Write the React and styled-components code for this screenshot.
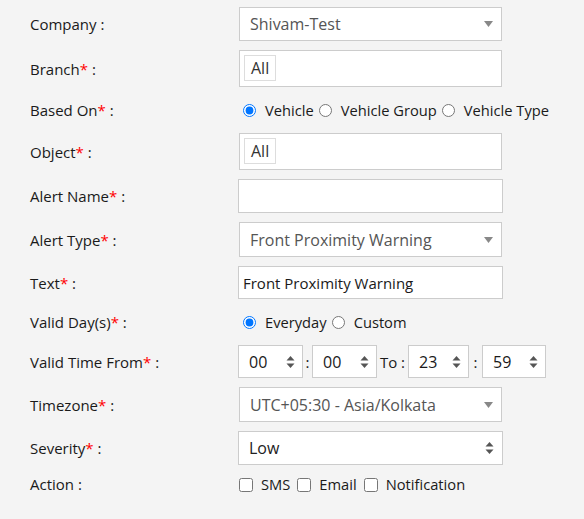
import React from "react";
import styled, { createGlobalStyle } from "styled-components";

const GlobalStyle = createGlobalStyle`
  html, body {
    margin: 0;
    padding: 0;
    background: #f4f4f4;
  }
  body {
    font-family: "Open Sans", "Liberation Sans", sans-serif;
    font-size: 15px;
    color: #1a1a1a;
  }
`;

const Form = styled.div`
  display: flex;
  flex-direction: column;
  gap: 9px;
  padding: 7px 0 0 30px;
  width: 584px;
  height: 512px;
  box-sizing: border-box;
`;

const Row = styled.div`
  display: flex;
  align-items: center;
  height: ${({ $h }) => $h}px;
  white-space: nowrap;
`;

const Label = styled.div`
  width: 208px;
  flex-shrink: 0;
  color: #1a1a1a;
`;

const Star = styled.span`
  color: #f00;
`;

const Control = styled.div`
  display: flex;
  align-items: center;
  height: 100%;
`;

const SelectWrap = styled.div`
  position: relative;
  margin-left: ${({ $flush }) => ($flush ? 0 : 1)}px;
  width: ${({ $flush }) => ($flush ? 265 : 263)}px;
  height: 100%;
`;

const Select = styled.select`
  appearance: none;
  width: 100%;
  height: 100%;
  box-sizing: border-box;
  border: 1px solid #ccc;
  border-radius: 0;
  background: #fff;
  padding: 0 30px 0 10px;
  font-family: inherit;
  font-size: 16px;
  color: ${({ $dark }) => ($dark ? "#222" : "#555")};
  outline: none;
`;

const Arrow = styled.span`
  position: absolute;
  right: ${({ $right }) => $right}px;
  top: 50%;
  transform: translateY(-50%);
  display: flex;
  pointer-events: none;
`;

const TagBox = styled.div`
  margin-left: 1px;
  width: 263px;
  height: 100%;
  box-sizing: border-box;
  border: 1px solid #ccc;
  background: #fff;
  padding: 4px;
  display: flex;
  align-items: flex-start;
`;

const Tag = styled.span`
  border: 1px solid #ddd;
  padding: 0 6px;
  height: 26px;
  line-height: 25px;
  box-sizing: border-box;
  font-size: 16px;
  color: #333;
  background: #fff;
`;

const TextInput = styled.input`
  width: 265px;
  height: 100%;
  box-sizing: border-box;
  border: 1px solid #ccc;
  border-radius: 0;
  background: #fff;
  padding: 0 4px;
  font-family: inherit;
  font-size: 15px;
  color: #1a1a1a;
  outline: none;
`;

const Choice = styled.label`
  display: flex;
  align-items: center;
  margin-right: ${({ $gap }) => $gap ?? 4}px;
  color: #1a1a1a;
  font-size: 14.7px;
`;

const Radio = styled.input.attrs({ type: "radio" })`
  width: 13px;
  height: 13px;
  margin: 1px 9px 0 ${({ $first }) => ($first ? 5 : 0)}px;
  accent-color: #0075ff;
`;

const Check = styled.input.attrs({ type: "checkbox" })`
  width: 14px;
  height: 14px;
  margin: 2px 8px 0 1px;
`;

const Spin = styled.div`
  position: relative;
  width: ${({ $w }) => $w}px;
  height: 100%;
`;

const SpinInput = styled.input`
  width: 100%;
  height: 100%;
  box-sizing: border-box;
  border: 1px solid #ccc;
  background: #fff;
  padding: 0 0 0 10px;
  font-family: inherit;
  font-size: 16px;
  color: #1a1a1a;
  outline: none;
`;

const Sep = styled.span`
  width: ${({ $w }) => $w}px;
  text-align: center;
  font-size: 15px;
  color: #1a1a1a;
`;

const DownTri = () => (
  <svg width="9" height="6" viewBox="0 0 9 6">
    <path d="M0 0 L9 0 L4.5 6 Z" fill="#888" />
  </svg>
);

const UpDown = () => (
  <svg width="9" height="13" viewBox="0 0 9 13">
    <path d="M0.5 5 L8.5 5 L4.5 0.5 Z" fill="#555" />
    <path d="M0.5 8 L8.5 8 L4.5 12.5 Z" fill="#555" />
  </svg>
);

const SelectField = ({ value, dark, updown }) => (
  <SelectWrap $flush={updown}>
    <Select $dark={dark} defaultValue={value}>
      <option>{value}</option>
    </Select>
    <Arrow $right={9}>{updown ? <UpDown /> : <DownTri />}</Arrow>
  </SelectWrap>
);

const TimeBox = ({ w, value }) => (
  <Spin $w={w}>
    <SpinInput defaultValue={value} readOnly />
    <Arrow $right={8}>
      <UpDown />
    </Arrow>
  </Spin>
);

const Req = ({ children }) => (
  <Label>
    {children}
    <Star>*</Star> :
  </Label>
);

export default function App() {
  return (
    <>
      <GlobalStyle />
      <Form>
        <Row $h={34}>
          <Label>Company :</Label>
          <Control>
            <SelectField value="Shivam-Test" />
          </Control>
        </Row>
        <Row $h={37}>
          <Req>Branch</Req>
          <Control>
            <TagBox>
              <Tag>All</Tag>
            </TagBox>
          </Control>
        </Row>
        <Row $h={28}>
          <Req>Based On</Req>
          <Control>
            <Choice $gap={5}>
              <Radio name="based" $first defaultChecked />
              Vehicle
            </Choice>
            <Choice $gap={5}>
              <Radio name="based" />
              Vehicle Group
            </Choice>
            <Choice>
              <Radio name="based" />
              Vehicle Type
            </Choice>
          </Control>
        </Row>
        <Row $h={37}>
          <Req>Object</Req>
          <Control>
            <TagBox>
              <Tag>All</Tag>
            </TagBox>
          </Control>
        </Row>
        <Row $h={34}>
          <Req>Alert Name</Req>
          <Control>
            <TextInput defaultValue="" />
          </Control>
        </Row>
        <Row $h={35}>
          <Req>Alert Type</Req>
          <Control>
            <SelectField value="Front Proximity Warning" />
          </Control>
        </Row>
        <Row $h={33}>
          <Req>Text</Req>
          <Control>
            <TextInput defaultValue="Front Proximity Warning" />
          </Control>
        </Row>
        <Row $h={28}>
          <Req>Valid Day(s)</Req>
          <Control>
            <Choice $gap={5}>
              <Radio name="day" $first defaultChecked />
              Everyday
            </Choice>
            <Choice>
              <Radio name="day" />
              Custom
            </Choice>
          </Control>
        </Row>
        <Row $h={33}>
          <Req>Valid Time From</Req>
          <Control>
            <TimeBox w={65} value="00" />
            <Sep $w={9}>:</Sep>
            <TimeBox w={65} value="00" />
            <Sep $w={31}>To :</Sep>
            <TimeBox w={61} value="23" />
            <Sep $w={13}>:</Sep>
            <TimeBox w={64} value="59" />
          </Control>
        </Row>
        <Row $h={35}>
          <Req>Timezone</Req>
          <Control>
            <SelectField value="UTC+05:30 - Asia/Kolkata" />
          </Control>
        </Row>
        <Row $h={34}>
          <Req>Severity</Req>
          <Control>
            <SelectField value="Low" dark updown />
          </Control>
        </Row>
        <Row $h={20}>
          <Label>Action :</Label>
          <Control>
            <Choice $gap={6}>
              <Check />
              SMS
            </Choice>
            <Choice $gap={6}>
              <Check />
              Email
            </Choice>
            <Choice>
              <Check />
              Notification
            </Choice>
          </Control>
        </Row>
      </Form>
    </>
  );
}
